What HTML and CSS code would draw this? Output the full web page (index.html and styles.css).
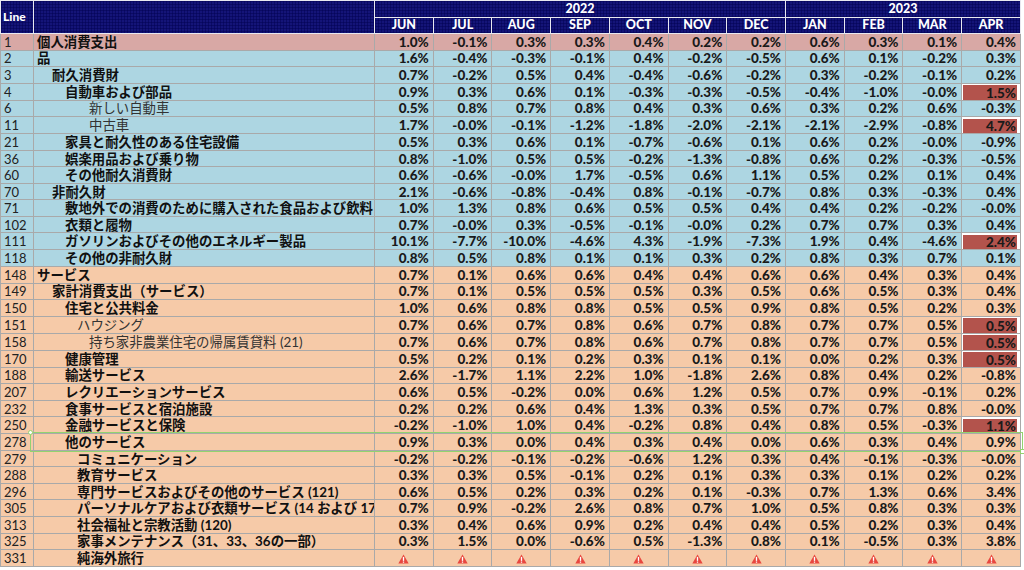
FILE: index.html
```html
<!DOCTYPE html>
<html lang="ja">
<head>
<meta charset="utf-8">
<title>PCE</title>
<link rel="stylesheet" href="styles.css">
</head>
<body>
<div class="wrap">
<table class="pce">
<colgroup><col class="c-line"><col class="c-label"><col><col><col><col><col><col><col><col><col><col><col></colgroup>
<thead>
<tr class="h1"><th class="hline" rowspan="2">Line</th><th class="hlabel" rowspan="2"></th><th colspan="7">2022</th><th colspan="4">2023</th></tr>
<tr class="h2"><th>JUN</th><th>JUL</th><th>AUG</th><th>SEP</th><th>OCT</th><th>NOV</th><th>DEC</th><th>JAN</th><th>FEB</th><th>MAR</th><th>APR</th></tr>
</thead>
<tbody>
<tr class="pink"><td class="ln">1</td><td class="lb l0">個人消費支出</td><td>1.0%</td><td>-0.1%</td><td>0.3%</td><td>0.3%</td><td>0.4%</td><td>0.2%</td><td>0.2%</td><td>0.6%</td><td>0.3%</td><td>0.1%</td><td>0.4%</td></tr>
<tr class="blue"><td class="ln">2</td><td class="lb l0">品</td><td>1.6%</td><td>-0.4%</td><td>-0.3%</td><td>-0.1%</td><td>0.4%</td><td>-0.2%</td><td>-0.5%</td><td>0.6%</td><td>0.1%</td><td>-0.2%</td><td>0.3%</td></tr>
<tr class="blue"><td class="ln">3</td><td class="lb l1">耐久消費財</td><td>0.7%</td><td>-0.2%</td><td>0.5%</td><td>0.4%</td><td>-0.4%</td><td>-0.6%</td><td>-0.2%</td><td>0.3%</td><td>-0.2%</td><td>-0.1%</td><td>0.2%</td></tr>
<tr class="blue"><td class="ln">4</td><td class="lb l2">自動車および部品</td><td>0.9%</td><td>0.3%</td><td>0.6%</td><td>0.1%</td><td>-0.3%</td><td>-0.3%</td><td>-0.5%</td><td>-0.4%</td><td>-1.0%</td><td>-0.0%</td><td class="hl">1.5%</td></tr>
<tr class="blue"><td class="ln">6</td><td class="lb l4 thin">新しい自動車</td><td>0.5%</td><td>0.8%</td><td>0.7%</td><td>0.8%</td><td>0.4%</td><td>0.3%</td><td>0.6%</td><td>0.3%</td><td>0.2%</td><td>0.6%</td><td>-0.3%</td></tr>
<tr class="blue"><td class="ln">11</td><td class="lb l4 thin">中古車</td><td>1.7%</td><td>-0.0%</td><td>-0.1%</td><td>-1.2%</td><td>-1.8%</td><td>-2.0%</td><td>-2.1%</td><td>-2.1%</td><td>-2.9%</td><td>-0.8%</td><td class="hl">4.7%</td></tr>
<tr class="blue"><td class="ln">21</td><td class="lb l2">家具と耐久性のある住宅設備</td><td>0.5%</td><td>0.3%</td><td>0.6%</td><td>0.1%</td><td>-0.7%</td><td>-0.6%</td><td>0.1%</td><td>0.6%</td><td>0.2%</td><td>-0.0%</td><td>-0.9%</td></tr>
<tr class="blue"><td class="ln">36</td><td class="lb l2">娯楽用品および乗り物</td><td>0.8%</td><td>-1.0%</td><td>0.5%</td><td>0.5%</td><td>-0.2%</td><td>-1.3%</td><td>-0.8%</td><td>0.6%</td><td>0.2%</td><td>-0.3%</td><td>-0.5%</td></tr>
<tr class="blue"><td class="ln">60</td><td class="lb l2">その他耐久消費財</td><td>0.6%</td><td>-0.6%</td><td>-0.0%</td><td>1.7%</td><td>-0.5%</td><td>0.6%</td><td>1.1%</td><td>0.5%</td><td>0.2%</td><td>0.1%</td><td>0.4%</td></tr>
<tr class="blue"><td class="ln">70</td><td class="lb l1">非耐久財</td><td>2.1%</td><td>-0.6%</td><td>-0.8%</td><td>-0.4%</td><td>0.8%</td><td>-0.1%</td><td>-0.7%</td><td>0.8%</td><td>0.3%</td><td>-0.3%</td><td>0.4%</td></tr>
<tr class="blue"><td class="ln">71</td><td class="lb l2">敷地外での消費のために購入された食品および飲料</td><td>1.0%</td><td>1.3%</td><td>0.8%</td><td>0.6%</td><td>0.5%</td><td>0.5%</td><td>0.4%</td><td>0.4%</td><td>0.2%</td><td>-0.2%</td><td>-0.0%</td></tr>
<tr class="blue"><td class="ln">102</td><td class="lb l2">衣類と履物</td><td>0.7%</td><td>-0.0%</td><td>0.3%</td><td>-0.5%</td><td>-0.1%</td><td>-0.0%</td><td>0.2%</td><td>0.7%</td><td>0.7%</td><td>0.3%</td><td>0.4%</td></tr>
<tr class="blue"><td class="ln">111</td><td class="lb l2">ガソリンおよびその他のエネルギー製品</td><td>10.1%</td><td>-7.7%</td><td>-10.0%</td><td>-4.6%</td><td>4.3%</td><td>-1.9%</td><td>-7.3%</td><td>1.9%</td><td>0.4%</td><td>-4.6%</td><td class="hl">2.4%</td></tr>
<tr class="blue"><td class="ln">118</td><td class="lb l2">その他の非耐久財</td><td>0.8%</td><td>0.5%</td><td>0.8%</td><td>0.1%</td><td>0.1%</td><td>0.3%</td><td>0.2%</td><td>0.8%</td><td>0.3%</td><td>0.7%</td><td>0.1%</td></tr>
<tr class="peach"><td class="ln">148</td><td class="lb l0">サービス</td><td>0.7%</td><td>0.1%</td><td>0.6%</td><td>0.6%</td><td>0.4%</td><td>0.4%</td><td>0.6%</td><td>0.6%</td><td>0.4%</td><td>0.3%</td><td>0.4%</td></tr>
<tr class="peach"><td class="ln">149</td><td class="lb l1">家計消費支出（サービス）</td><td>0.7%</td><td>0.1%</td><td>0.5%</td><td>0.5%</td><td>0.5%</td><td>0.3%</td><td>0.5%</td><td>0.6%</td><td>0.5%</td><td>0.3%</td><td>0.4%</td></tr>
<tr class="peach"><td class="ln">150</td><td class="lb l2">住宅と公共料金</td><td>1.0%</td><td>0.6%</td><td>0.8%</td><td>0.8%</td><td>0.5%</td><td>0.5%</td><td>0.9%</td><td>0.8%</td><td>0.5%</td><td>0.2%</td><td>0.3%</td></tr>
<tr class="peach"><td class="ln">151</td><td class="lb l3 thin">ハウジング</td><td>0.7%</td><td>0.6%</td><td>0.7%</td><td>0.8%</td><td>0.6%</td><td>0.7%</td><td>0.8%</td><td>0.7%</td><td>0.7%</td><td>0.5%</td><td class="hl">0.5%</td></tr>
<tr class="peach"><td class="ln">158</td><td class="lb l4 thin">持ち家非農業住宅の帰属賃貸料 (21)</td><td>0.7%</td><td>0.6%</td><td>0.7%</td><td>0.8%</td><td>0.6%</td><td>0.7%</td><td>0.8%</td><td>0.7%</td><td>0.7%</td><td>0.5%</td><td class="hl">0.5%</td></tr>
<tr class="peach"><td class="ln">170</td><td class="lb l2">健康管理</td><td>0.5%</td><td>0.2%</td><td>0.1%</td><td>0.2%</td><td>0.3%</td><td>0.1%</td><td>0.1%</td><td>0.0%</td><td>0.2%</td><td>0.3%</td><td class="hl">0.5%</td></tr>
<tr class="peach"><td class="ln">188</td><td class="lb l2">輸送サービス</td><td>2.6%</td><td>-1.7%</td><td>1.1%</td><td>2.2%</td><td>1.0%</td><td>-1.8%</td><td>2.6%</td><td>0.8%</td><td>0.4%</td><td>0.2%</td><td>-0.8%</td></tr>
<tr class="peach"><td class="ln">207</td><td class="lb l2">レクリエーションサービス</td><td>0.6%</td><td>0.5%</td><td>-0.2%</td><td>0.0%</td><td>0.6%</td><td>1.2%</td><td>0.5%</td><td>0.7%</td><td>0.9%</td><td>-0.1%</td><td>0.2%</td></tr>
<tr class="peach"><td class="ln">232</td><td class="lb l2">食事サービスと宿泊施設</td><td>0.2%</td><td>0.2%</td><td>0.6%</td><td>0.4%</td><td>1.3%</td><td>0.3%</td><td>0.5%</td><td>0.7%</td><td>0.7%</td><td>0.8%</td><td>-0.0%</td></tr>
<tr class="peach"><td class="ln">250</td><td class="lb l2">金融サービスと保険</td><td>-0.2%</td><td>-1.0%</td><td>1.0%</td><td>0.4%</td><td>-0.2%</td><td>0.8%</td><td>0.4%</td><td>0.8%</td><td>0.5%</td><td>-0.3%</td><td class="hl">1.1%</td></tr>
<tr class="peach"><td class="ln">278</td><td class="lb l2">他のサービス</td><td>0.9%</td><td>0.3%</td><td>0.0%</td><td>0.4%</td><td>0.3%</td><td>0.4%</td><td>0.0%</td><td>0.6%</td><td>0.3%</td><td>0.4%</td><td>0.9%</td></tr>
<tr class="peach"><td class="ln">279</td><td class="lb l3">コミュニケーション</td><td>-0.2%</td><td>-0.2%</td><td>-0.1%</td><td>-0.2%</td><td>-0.6%</td><td>1.2%</td><td>0.3%</td><td>0.4%</td><td>-0.1%</td><td>-0.3%</td><td>-0.0%</td></tr>
<tr class="peach"><td class="ln">288</td><td class="lb l3">教育サービス</td><td>0.3%</td><td>0.3%</td><td>0.5%</td><td>-0.1%</td><td>0.2%</td><td>0.1%</td><td>0.3%</td><td>0.3%</td><td>0.1%</td><td>0.2%</td><td>0.2%</td></tr>
<tr class="peach"><td class="ln">296</td><td class="lb l3">専門サービスおよびその他のサービス (121)</td><td>0.6%</td><td>0.5%</td><td>0.2%</td><td>0.3%</td><td>0.2%</td><td>0.1%</td><td>-0.3%</td><td>0.7%</td><td>1.3%</td><td>0.6%</td><td>3.4%</td></tr>
<tr class="peach"><td class="ln">305</td><td class="lb l3">パーソナルケアおよび衣類サービス (14 および 17</td><td>0.7%</td><td>0.9%</td><td>-0.2%</td><td>2.6%</td><td>0.8%</td><td>0.7%</td><td>1.0%</td><td>0.5%</td><td>0.8%</td><td>0.3%</td><td>0.3%</td></tr>
<tr class="peach"><td class="ln">313</td><td class="lb l3">社会福祉と宗教活動 (120)</td><td>0.3%</td><td>0.4%</td><td>0.6%</td><td>0.9%</td><td>0.2%</td><td>0.4%</td><td>0.4%</td><td>0.5%</td><td>0.2%</td><td>0.3%</td><td>0.4%</td></tr>
<tr class="peach"><td class="ln">325</td><td class="lb l3">家事メンテナンス（31、33、36の一部）</td><td>0.3%</td><td>1.5%</td><td>0.0%</td><td>-0.6%</td><td>0.5%</td><td>-1.3%</td><td>0.8%</td><td>0.1%</td><td>-0.5%</td><td>0.3%</td><td>3.8%</td></tr>
<tr class="peach warn"><td class="ln">331</td><td class="lb l3">純海外旅行</td>
<td><svg class="wi" viewBox="0 0 10 9"><path d="M5 0.3 L9.7 8.7 L0.3 8.7 Z" fill="#e8473f"/><rect x="4.4" y="2.6" width="1.2" height="3.6" fill="#fff"/><rect x="4.4" y="6.8" width="1.2" height="1.1" fill="#fff"/></svg></td>
<td><svg class="wi" viewBox="0 0 10 9"><path d="M5 0.3 L9.7 8.7 L0.3 8.7 Z" fill="#e8473f"/><rect x="4.4" y="2.6" width="1.2" height="3.6" fill="#fff"/><rect x="4.4" y="6.8" width="1.2" height="1.1" fill="#fff"/></svg></td>
<td><svg class="wi" viewBox="0 0 10 9"><path d="M5 0.3 L9.7 8.7 L0.3 8.7 Z" fill="#e8473f"/><rect x="4.4" y="2.6" width="1.2" height="3.6" fill="#fff"/><rect x="4.4" y="6.8" width="1.2" height="1.1" fill="#fff"/></svg></td>
<td><svg class="wi" viewBox="0 0 10 9"><path d="M5 0.3 L9.7 8.7 L0.3 8.7 Z" fill="#e8473f"/><rect x="4.4" y="2.6" width="1.2" height="3.6" fill="#fff"/><rect x="4.4" y="6.8" width="1.2" height="1.1" fill="#fff"/></svg></td>
<td><svg class="wi" viewBox="0 0 10 9"><path d="M5 0.3 L9.7 8.7 L0.3 8.7 Z" fill="#e8473f"/><rect x="4.4" y="2.6" width="1.2" height="3.6" fill="#fff"/><rect x="4.4" y="6.8" width="1.2" height="1.1" fill="#fff"/></svg></td>
<td><svg class="wi" viewBox="0 0 10 9"><path d="M5 0.3 L9.7 8.7 L0.3 8.7 Z" fill="#e8473f"/><rect x="4.4" y="2.6" width="1.2" height="3.6" fill="#fff"/><rect x="4.4" y="6.8" width="1.2" height="1.1" fill="#fff"/></svg></td>
<td><svg class="wi" viewBox="0 0 10 9"><path d="M5 0.3 L9.7 8.7 L0.3 8.7 Z" fill="#e8473f"/><rect x="4.4" y="2.6" width="1.2" height="3.6" fill="#fff"/><rect x="4.4" y="6.8" width="1.2" height="1.1" fill="#fff"/></svg></td>
<td><svg class="wi" viewBox="0 0 10 9"><path d="M5 0.3 L9.7 8.7 L0.3 8.7 Z" fill="#e8473f"/><rect x="4.4" y="2.6" width="1.2" height="3.6" fill="#fff"/><rect x="4.4" y="6.8" width="1.2" height="1.1" fill="#fff"/></svg></td>
<td><svg class="wi" viewBox="0 0 10 9"><path d="M5 0.3 L9.7 8.7 L0.3 8.7 Z" fill="#e8473f"/><rect x="4.4" y="2.6" width="1.2" height="3.6" fill="#fff"/><rect x="4.4" y="6.8" width="1.2" height="1.1" fill="#fff"/></svg></td>
<td><svg class="wi" viewBox="0 0 10 9"><path d="M5 0.3 L9.7 8.7 L0.3 8.7 Z" fill="#e8473f"/><rect x="4.4" y="2.6" width="1.2" height="3.6" fill="#fff"/><rect x="4.4" y="6.8" width="1.2" height="1.1" fill="#fff"/></svg></td>
<td><svg class="wi" viewBox="0 0 10 9"><path d="M5 0.3 L9.7 8.7 L0.3 8.7 Z" fill="#e8473f"/><rect x="4.4" y="2.6" width="1.2" height="3.6" fill="#fff"/><rect x="4.4" y="6.8" width="1.2" height="1.1" fill="#fff"/></svg></td>
</tr>
</tbody>
</table>
<div class="sel"><span class="sel-h1"></span><span class="sel-h2"></span></div>
</div>
</body>
</html>
```

FILE: styles.css
```css
* { box-sizing: border-box; }
html, body { margin: 0; padding: 0; background: #fff; }
body { width: 1024px; height: 570px; overflow: hidden; }

.wrap { position: relative; width: 1021px; }

.pce {
  width: 1021px;
  table-layout: fixed;
  border-collapse: collapse;
  font-family: Lato, "Noto Sans CJK JP", sans-serif;
  color: #1a1a1a;
}
.c-line { width: 33px; }
.c-label { width: 341px; }

.pce th {
  background-color: #06065c;
  background-image: radial-gradient(circle, #2a2aa6 0.7px, rgba(0,0,0,0) 1.1px);
  background-size: 3px 3px;
  color: #fff;
  font-weight: 900;
  font-size: 12.5px;
  border: 1px solid #e8e8f0;
  padding: 0;
  text-align: center;
  line-height: 14px;
  height: 16.5px;
}
.pce th.hline { text-align: left; padding-left: 2px; font-size: 12px; }

.pce td {
  border: 1px solid #a9a9a9;
  padding: 0 4px 0 2px;
  height: 16.55px;
  font-size: 13.5px;
  font-weight: 900;
  text-align: right;
  line-height: 14px;
  white-space: nowrap;
  overflow: hidden;
}
.pce tbody tr:first-child td { border-top-color: #eef0f4; }

.pce td.ln {
  text-align: left;
  font-weight: 400;
  font-size: 13px;
  padding: 0 0 0 3px;
  color: #222;
}
.pce td.lb {
  text-align: left;
  font-size: 13.4px;
  font-weight: 700;
  color: #111;
}
.pce td.thin { font-weight: 400; color: #333; }
.l0 { padding-left: 3px !important; }
.l1 { padding-left: 18px !important; }
.l2 { padding-left: 31px !important; }
.l3 { padding-left: 43px !important; }
.l4 { padding-left: 55px !important; }

.pink td { background: #d8a8a5; }
.blue td { background: #add6e2; }
.peach td { background: #f6caa8; }

.pce td.hl {
  background: #b3534c;
  background-clip: content-box;
  padding: 2px 4px 0 1px;
}

.warn td:not(.ln):not(.lb) { text-align: center; padding: 0; }
.wi { width: 11px; height: 10px; display: inline-block; vertical-align: middle; }

.sel {
  position: absolute;
  left: 30px;
  top: 432px;
  width: 993px;
  height: 20px;
  border: 1px solid #93d26f;
}
.sel-h1 {
  position: absolute;
  left: -3px;
  top: -3px;
  width: 5px;
  height: 5px;
  border-radius: 50%;
  background: #fff;
  border: 1px solid #93d26f;
}
.sel-h2 {
  position: absolute;
  right: -3px;
  bottom: -3px;
  width: 5px;
  height: 5px;
  background: #fff;
  border: 1px solid #93d26f;
}
```
